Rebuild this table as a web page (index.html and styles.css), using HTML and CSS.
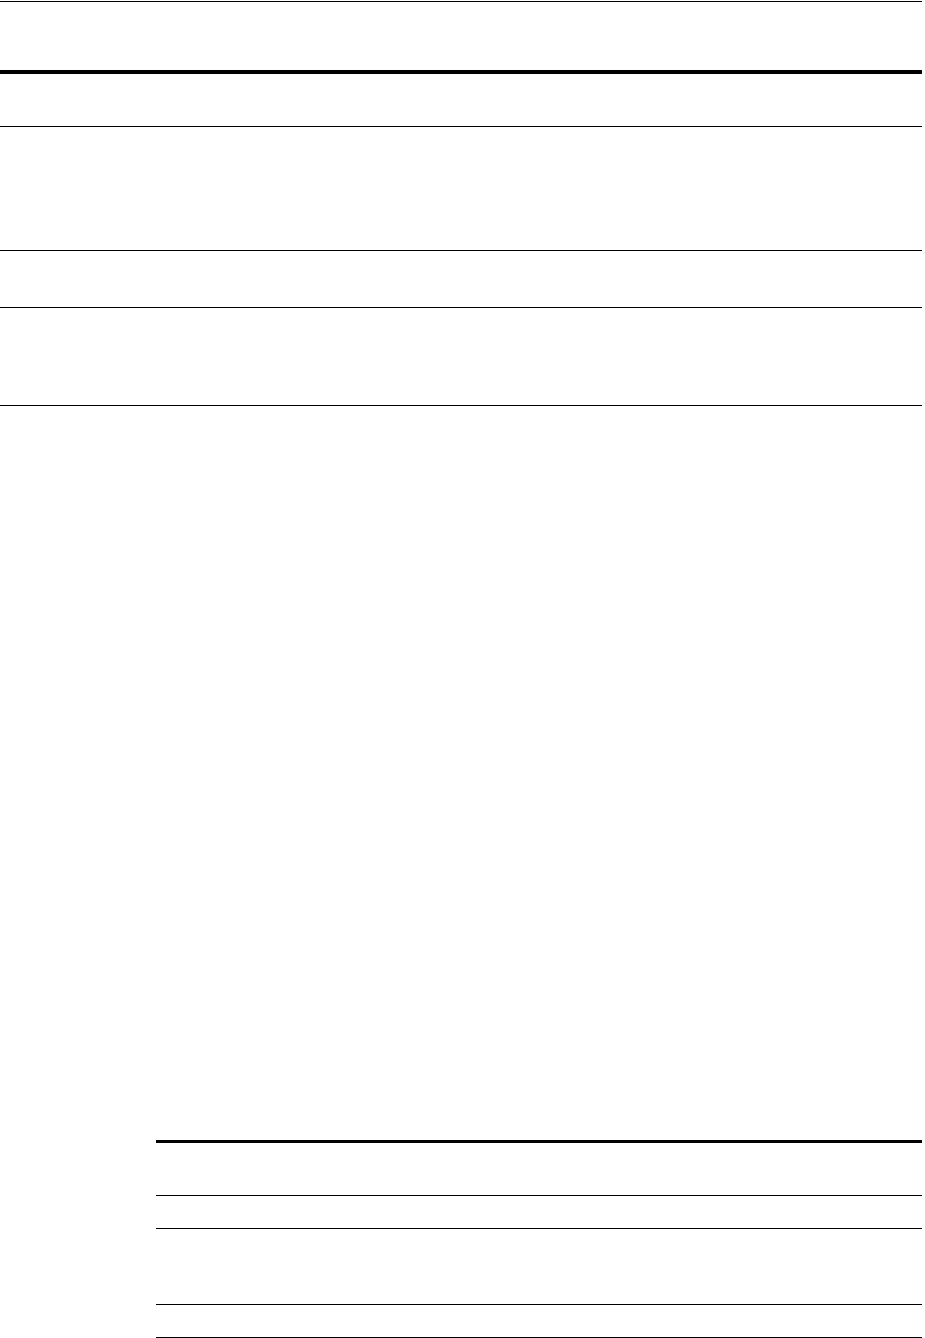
FILE: index.html
```html
<!DOCTYPE html>
<html lang="en">
<head>
    <meta charset="UTF-8">
    <meta name="viewport" content="width=device-width, initial-scale=1.0">
    <title>Tables</title>
    <link rel="stylesheet" href="styles.css">
</head>
<body>
    <div class="page">
        <section class="table table-wide">
            <div class="row head"></div>
            <div class="row r1"></div>
            <div class="row r2"></div>
            <div class="row r3"></div>
            <div class="row r4"></div>
        </section>
        <section class="table table-inset">
            <div class="row head"></div>
            <div class="row short"></div>
            <div class="row tall"></div>
            <div class="row short"></div>
        </section>
    </div>
</body>
</html>
```
FILE: styles.css
```css
body {
    margin: 0;
    background-color: #fff;
    font-family: "Liberation Sans", Arial, sans-serif;
    color: #000;
}
.page {
    width: 922px;
    padding-top: 1px;
}
.table {
    display: flex;
    flex-direction: column;
}
.row {
    border-bottom: 1px solid #000;
}
.table-wide {
    border-top: 1px solid #000;
}
.table-wide .head {
    height: 68px;
    border-bottom: 4px solid #000;
}
.table-wide .r1 {
    height: 52px;
}
.table-wide .r2 {
    height: 123px;
}
.table-wide .r3 {
    height: 56px;
}
.table-wide .r4 {
    height: 97px;
}
.table-inset {
    margin-top: 734px;
    margin-left: 156px;
    border-top: 3px solid #000;
}
.table-inset .head {
    height: 52px;
}
.table-inset .short {
    height: 32px;
}
.table-inset .tall {
    height: 75px;
}
```
